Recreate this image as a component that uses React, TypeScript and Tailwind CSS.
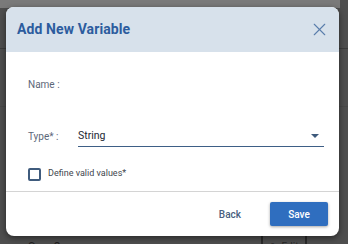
import { X } from 'lucide-react';

export default function App() {
  return (
    <div className="relative w-[348px] h-[244px] overflow-hidden bg-[#4e4e4e] font-['Roboto',sans-serif]">
      {/* page behind the backdrop */}
      <div className="flex flex-col">
        <div className="h-[8px] w-[340px] bg-[#7a7a7a]" />
        <div className="h-[41px] border-b border-[#3c3c3c]" />
        <div className="h-[58px] border-b border-[#484848]" />
        <div className="h-[126px]" />
        <div className="flex items-start h-[20px]">
          <span className="ml-[28px] mt-[5px] text-[12px] text-[#1e1e1e]">Seq_3</span>
          <div className="ml-auto mr-[41px] mt-[-2px] w-[46px] h-[22px] border-2 border-[#2a2a2a] flex items-start justify-center gap-1 pt-[6px] text-[10px] text-[#262626]">
            <span>✎</span>
            <span>Edit</span>
          </div>
        </div>
      </div>

      {/* dialog */}
      <div className="absolute left-[6px] top-[7px] w-[333px] h-[229px] bg-white rounded-[8px] overflow-hidden shadow-[0_2px_6px_rgba(0,0,0,0.5)] flex flex-col">
        <div className="h-[45px] shrink-0 bg-[#d7e1eb] flex items-center justify-between pl-[11px] pr-[9px]">
          <h2 className="text-[14px] font-bold text-[#2c5c9e] tracking-[0.1px]">Add New Variable</h2>
          <X className="w-[21px] h-[21px] text-[#5a7eac]" strokeWidth={1.3} />
        </div>

        <div className="flex flex-col pl-[22px] pr-[15px] pt-[22px] h-[140px] border-b border-[#d4d4d4]">
          <div className="h-[20px] flex items-center text-[10px] text-[#5d6779]">Name :</div>

          <div className="mt-[31px] h-[22px] flex items-center">
            <span className="w-[50px] text-[10px] text-[#5d6779]">Type* :</span>
            <div className="flex-1 h-[22px] flex items-center justify-between border-b border-[#3e5f86] pr-[5px]">
              <span className="text-[10.5px] text-[#1d2733]">String</span>
              <svg width="8" height="4" viewBox="0 0 8 4">
                <path d="M0 0 L8 0 L4 4 Z" fill="#3e5a7c" />
              </svg>
            </div>
          </div>

          <div className="mt-[20px] h-[14px] flex items-center gap-[7px]">
            <div className="w-[13px] h-[13px] border-2 border-[#3f5b7d] rounded-[2px]" />
            <span className="text-[9px] text-[#41464d]">Define valid values*</span>
          </div>
        </div>

        <div className="flex-1 flex items-center justify-end pr-[11px] gap-[29px]">
          <button className="text-[10px] font-medium text-[#4a5f7e]">Back</button>
          <button className="w-[58px] h-[24px] rounded-[2px] bg-[#2f6ebf] text-white text-[10px] font-medium shadow-[0_1px_3px_rgba(0,0,0,0.35)]">
            Save
          </button>
        </div>
      </div>
    </div>
  );
}
